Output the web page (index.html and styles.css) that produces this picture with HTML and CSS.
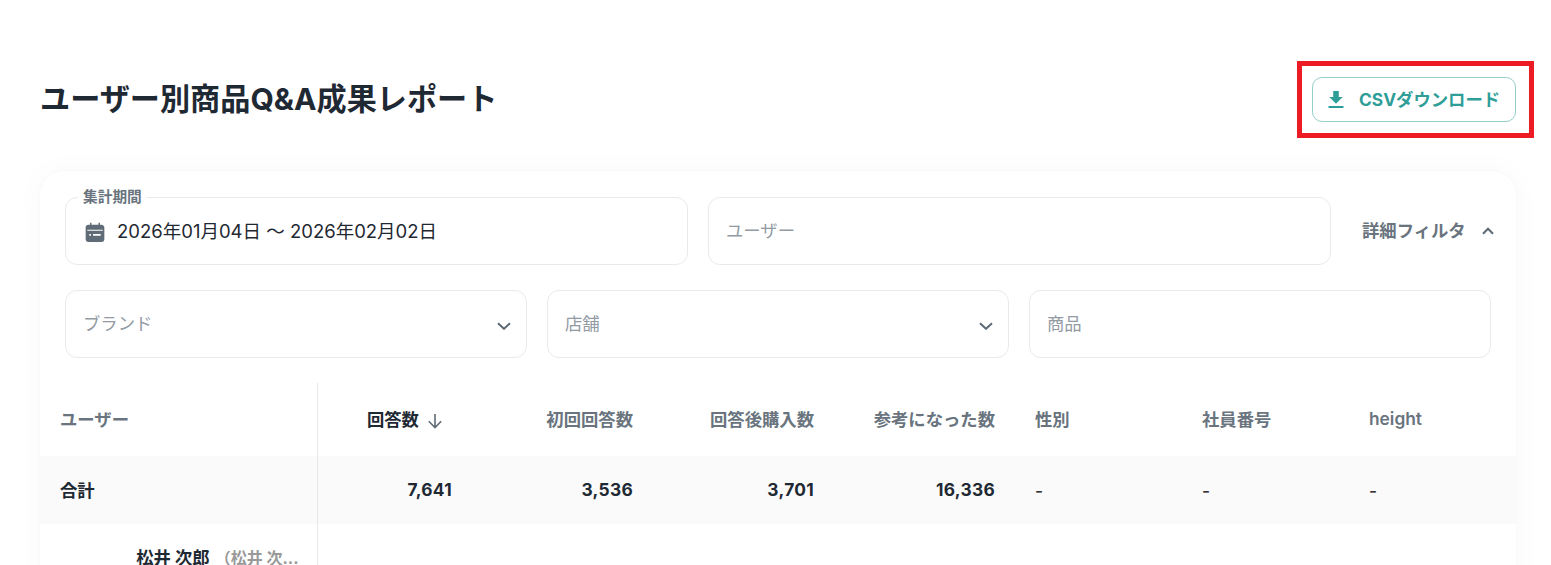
FILE: index.html
```html
<!DOCTYPE html>
<html lang="ja">
<head>
    <meta charset="UTF-8">
    <title>ユーザー別商品Q&amp;A成果レポート</title>
    <link rel="stylesheet" href="styles.css">
</head>
<body>
    <div class="page">
        <header class="page-header">
            <h1>ユーザー別商品Q&amp;A成果レポート</h1>
            <button class="csv-button">
                <svg class="csv-icon" width="22" height="22" viewBox="0 0 22 22"><path d="M8.200 2h5.600v6h3.900L11 14.700 4.300 8h3.900zM3.500 17h15v2h-15z" fill="currentColor"/></svg>
                <span class="csv-text">CSVダウンロード</span>
                <span class="highlight"></span>
            </button>
        </header>

        <section class="card">
            <div class="filter-row">
                <div class="field field-date">
                    <span class="field-label">集計期間</span>
                    <svg class="date-icon" width="22" height="22" viewBox="0 0 20 20"><path d="M5.500 1.500h1.300v2h6.400v-2h1.300v2h.8A2.700 2.700 0 0 1 18.500 6.200v10.100a2.700 2.700 0 0 1-2.700 2.700H4.200a2.700 2.700 0 0 1-2.700-2.700V6.200a2.700 2.700 0 0 1 2.700-2.700h1.300zM3 8v.8h14V8zM4.800 11.800v1.500h1.500v-1.500zM8.200 11.800v1.500h7v-1.500z" fill="#5f6b76" fill-rule="evenodd"/></svg>
                    <span class="date-value">2026年01月04日 ～ 2026年02月02日</span>
                </div>
                <div class="field placeholder"><span>ユーザー</span></div>
                <div class="filter-toggle">
                    <span>詳細フィルタ</span>
                    <svg width="14" height="8" viewBox="0 0 14 8"><path d="M2 6.700 7 1.700l5 5" fill="none" stroke="#5f6b76" stroke-width="2"/></svg>
                </div>
            </div>
            <div class="filter-row filter-row-three">
                <div class="field placeholder"><span>ブランド</span>
                    <svg class="chevron" width="14" height="8" viewBox="0 0 14 8"><path d="M1 1.200 7 6.800l6-5.600" fill="none" stroke="#5f6b76" stroke-width="2"/></svg>
                </div>
                <div class="field placeholder"><span>店舗</span>
                    <svg class="chevron" width="14" height="8" viewBox="0 0 14 8"><path d="M1 1.200 7 6.800l6-5.600" fill="none" stroke="#5f6b76" stroke-width="2"/></svg>
                </div>
                <div class="field placeholder"><span>商品</span></div>
            </div>

            <table class="report">
                <colgroup>
                    <col class="col-user">
                    <col class="col-num-first">
                    <col class="col-num">
                    <col class="col-num">
                    <col class="col-num">
                    <col class="col-text">
                    <col class="col-text">
                    <col class="col-text">
                </colgroup>
                <thead>
                    <tr>
                        <th class="user-cell">ユーザー</th>
                        <th class="num sorted">回答数
                            <svg width="18" height="18" viewBox="0 0 18 18"><path d="M9 2v13.500M2.800 9.300 9 15.500l6.200-6.200" fill="none" stroke="#5f6b76" stroke-width="1.600"/></svg>
                        </th>
                        <th class="num">初回回答数</th>
                        <th class="num">回答後購入数</th>
                        <th class="num">参考になった数</th>
                        <th>性別</th>
                        <th>社員番号</th>
                        <th class="latin">height</th>
                    </tr>
                </thead>
                <tbody>
                    <tr class="total">
                        <td class="user-cell">合計</td>
                        <td class="num">7,641</td>
                        <td class="num">3,536</td>
                        <td class="num">3,701</td>
                        <td class="num">16,336</td>
                        <td class="empty">-</td>
                        <td class="empty">-</td>
                        <td class="empty">-</td>
                    </tr>
                    <tr class="person">
                        <td class="user-cell"><span class="name">松井 次郎</span><span class="kana">（松井 次...</span></td>
                        <td colspan="7"></td>
                    </tr>
                </tbody>
            </table>
        </section>
    </div>
</body>
</html>
```

FILE: styles.css
```css
html, body {
    margin: 0;
    height: 565px;
    overflow: hidden;
    background: #fff;
}

body {
    font-family: 'Inter', 'Noto Sans CJK JP', sans-serif;
    color: #1f2933;
}

.page {
    padding: 77px 35px 0 40px;
    height: 488px;
    overflow: hidden;
}

.page-header {
    display: flex;
    justify-content: space-between;
    align-items: center;
    height: 45px;
    margin-bottom: 49px;
}

h1 {
    margin: 0;
    font-size: 30.15px;
    font-weight: 700;
    line-height: 45px;
}

.csv-button {
    position: relative;
    display: flex;
    align-items: center;
    gap: 12px;
    width: 204px;
    height: 45px;
    padding: 0 0 0 12px;
    box-sizing: border-box;
    background: #fff;
    border: 1px solid #96cfc9;
    border-radius: 10px;
    color: #2f9e98;
    font-family: inherit;
    font-size: 17.33px;
    font-weight: 700;
}

.csv-icon {
    flex: none;
}

.csv-text {
    margin-top: -3px;
}

.highlight {
    position: absolute;
    left: -16px;
    top: -17px;
    width: 227px;
    height: 67px;
    border: 5px solid #ed1c24;
}

.card {
    height: 460px;
    padding: 26px 0 0;
    box-sizing: border-box;
    border-radius: 24px;
    background: #fff;
    box-shadow: 0 0 0 1px #f9f9f9, 0 0 30px rgba(0, 0, 0, 0.03);
}

.filter-row {
    display: flex;
    gap: 20px;
    padding: 0 25px;
    margin-bottom: 25px;
}

.filter-row-three .field {
    flex: 1;
}

.field {
    position: relative;
    display: flex;
    align-items: center;
    flex: none;
    width: 623px;
    height: 68px;
    padding: 0 17px;
    box-sizing: border-box;
    border: 1px solid #e8eaed;
    border-radius: 12px;
    font-size: 17.33px;
}

.field > span:not(.field-label) {
    margin-top: -3px;
}

.field-date {
    gap: 11px;
    padding-left: 18px;
}

.field-label {
    position: absolute;
    left: 12px;
    top: -10px;
    padding: 0 5px;
    background: #fff;
    color: #69747e;
    font-size: 14.7px;
    font-weight: 700;
    line-height: 18px;
}

.date-icon {
    flex: none;
    margin-top: 1px;
}

.date-value {
    color: #1f2933;
    font-size: 18.5px;
}

.placeholder {
    color: #929aa3;
}

.chevron {
    position: absolute;
    right: 15px;
    top: 31px;
}

.filter-toggle {
    display: flex;
    align-items: center;
    gap: 15px;
    margin-left: 11px;
    color: #69747e;
    font-size: 17.33px;
    font-weight: 700;
    white-space: nowrap;
}

.filter-toggle span {
    margin-top: -3px;
}

.report {
    width: 1476px;
    table-layout: fixed;
    border-collapse: collapse;
    font-size: 17.33px;
}

.col-user { width: 277px; }
.col-num-first { width: 155px; }
.col-num { width: 181px; }
.col-text { width: 167px; }

.report th,
.report td {
    padding: 0 20px;
    text-align: left;
}

.report th {
    height: 73px;
    padding-bottom: 3px;
    box-sizing: border-box;
    color: #69747e;
    font-weight: 700;
}

.report th.latin {
    font-weight: 600;
}

.report td {
    height: 68px;
    padding-bottom: 2px;
    box-sizing: border-box;
    color: #1f2933;
    font-weight: 700;
}

.report .num {
    text-align: right;
}

.report td.num {
    letter-spacing: 0.3px;
}

.report .user-cell {
    border-right: 1px solid #e6e8ea;
}

.report td.empty {
    padding-bottom: 0;
    color: #333;
    font-weight: 500;
}

.report th.sorted {
    padding-right: 28px;
    color: #1f2933;
    white-space: nowrap;
}

.report th.sorted svg {
    vertical-align: -4px;
    margin-left: 3px;
}

.total td {
    background: #fafafa;
}

.person .user-cell {
    vertical-align: top;
    padding-top: 20px;
    padding-right: 18px;
    text-align: right;
    white-space: nowrap;
}

.name {
    margin-right: 5px;
}

.kana {
    color: #999;
    font-size: 16px;
}
```
